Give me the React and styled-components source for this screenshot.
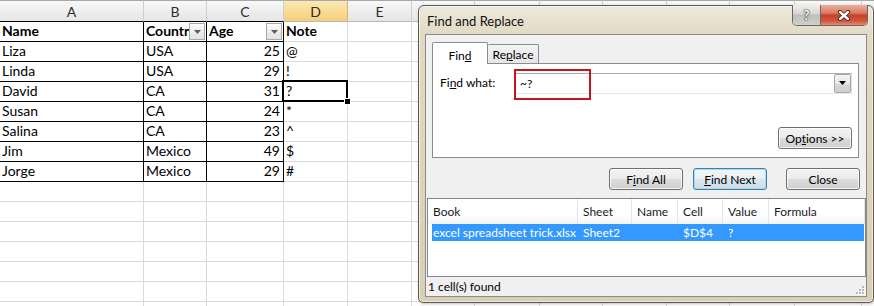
import React from 'react';
import styled, { createGlobalStyle, css } from 'styled-components';

const GlobalStyle = createGlobalStyle`
  html, body {
    margin: 0;
    padding: 0;
    background: #fff;
  }
  body {
    overflow: hidden;
  }
`;

const COLS = [144, 63, 77, 64, 64, 63, 65, 63, 64, 63, 65, 67, 64];
const LETTERS = ['A', 'B', 'C', 'D', 'E', 'F', 'G', 'H', 'I', 'J', 'K', 'L', 'M'];

const rows = [
  { name: 'Liza', country: 'USA', age: 25, note: '@' },
  { name: 'Linda', country: 'USA', age: 29, note: '!' },
  { name: 'David', country: 'CA', age: 31, note: '?' },
  { name: 'Susan', country: 'CA', age: 24, note: '*' },
  { name: 'Salina', country: 'CA', age: 23, note: '^' },
  { name: 'Jim', country: 'Mexico', age: 49, note: '$' },
  { name: 'Jorge', country: 'Mexico', age: 29, note: '#' },
];

const Page = styled.div`
  position: relative;
  width: 874px;
  height: 306px;
  overflow: hidden;
  background: #fff;
`;

/* ---------- spreadsheet ---------- */

const Sheet = styled.div`
  display: grid;
  grid-template-columns: ${COLS.map((w) => w + 'px').join(' ')};
  grid-template-rows: 22px;
  grid-auto-rows: 20px;
  font-family: Lato, 'Liberation Sans', sans-serif;
  font-size: 14px;
  color: #000;
`;

const ColHeader = styled.div`
  box-sizing: border-box;
  display: flex;
  align-items: center;
  justify-content: center;
  padding-top: 1px;
  border-top: 1px solid #a8a8a8;
  border-right: 1px solid ${(p) => (p.$selected ? '#d9b66a' : '#cfcfcf')};
  border-bottom: 1px solid ${(p) => (p.$dark ? '#000' : '#b9b9b9')};
  background: ${(p) =>
    p.$selected
      ? 'linear-gradient(#fbe9b4, #f7d98e 60%, #f4d07c)'
      : 'linear-gradient(#f8f8f8, #ececec 60%, #e6e6e6)'};
  color: #2d2d2d;
  font-size: 14px;
`;

const Cell = styled.div`
  position: relative;
  box-sizing: border-box;
  display: flex;
  align-items: flex-end;
  justify-content: ${(p) => (p.$align === 'right' ? 'flex-end' : 'flex-start')};
  padding: 0 3px 1px 2px;
  border-right: 1px solid ${(p) => (p.$boxed ? '#000' : '#d9d9d9')};
  border-bottom: 1px solid ${(p) => (p.$boxed ? '#000' : '#d9d9d9')};
  font-weight: ${(p) => (p.$bold ? 700 : 400)};
  line-height: 18px;
  white-space: nowrap;

  ${(p) =>
    p.$active &&
    css`
      &::after {
        content: '';
        position: absolute;
        left: -2px;
        top: -2px;
        right: -1px;
        bottom: -1px;
        border: 2px solid #000;
        pointer-events: none;
        z-index: 2;
      }
      &::before {
        content: '';
        position: absolute;
        right: -4px;
        bottom: -4px;
        width: 5px;
        height: 5px;
        background: #000;
        border: 1px solid #fff;
        z-index: 3;
      }
    `}
`;

const CellText = styled.span`
  flex: 1;
  min-width: 0;
  overflow: hidden;
`;

const FilterButton = styled.span`
  flex: none;
  box-sizing: border-box;
  width: 16px;
  height: 17px;
  margin-right: -2px;
  border: 1px solid #a9a9a9;
  background: linear-gradient(#fefefe, #ebebeb 55%, #e2e2e2);
  display: flex;
  align-items: center;
  justify-content: center;
`;

const Filter = () => (
  <FilterButton>
    <svg width="7" height="4" viewBox="0 0 7 4">
      <polygon points="0,0 7,0 3.5,4" fill="#5e5e5e" />
    </svg>
  </FilterButton>
);

/* ---------- dialog ---------- */

const Dialog = styled.div`
  position: absolute;
  left: 418px;
  top: 5px;
  box-sizing: border-box;
  width: 456px;
  height: 298px;
  display: flex;
  flex-direction: column;
  padding: 0 6px 5px 6px;
  border: 1px solid #5b5a55;
  border-radius: 6px 6px 5px 5px;
  background: linear-gradient(180deg, #eee9db 0%, #e1d9c3 28px, #d8cfb6 100%);
  box-shadow: inset 0 0 0 1px rgba(255, 255, 255, 0.55), 1px 1px 3px rgba(0, 0, 0, 0.25);
  font-family: Lato, 'Liberation Sans', sans-serif;
  font-size: 12px;
  color: #000;
`;

const TitleBar = styled.div`
  height: 28px;
  flex: none;
  display: flex;
  justify-content: space-between;
  align-items: flex-start;
`;

const Title = styled.div`
  align-self: center;
  padding-left: 2px;
  padding-top: 2px;
  font-size: 13px;
  color: #111;
`;

const CaptionGroup = styled.div`
  display: flex;
  height: 20px;
  margin-top: -1px;
  margin-right: -1px;
  border: 1px solid #6a6863;
  border-top: none;
  border-radius: 0 0 5px 5px;
  overflow: hidden;
`;

const CaptionButton = styled.div`
  display: flex;
  align-items: center;
  justify-content: center;
  width: ${(p) => (p.$close ? 46 : 27)}px;
  border-left: ${(p) => (p.$close ? '1px solid #6a6863' : 'none')};
  background: ${(p) =>
    p.$close
      ? 'linear-gradient(#eab1a2 0%, #da7a60 40%, #c7402a 52%, #d1573d 80%, #e28c72 100%)'
      : 'linear-gradient(#f0efec 0%, #d9d8d4 42%, #bfbebb 52%, #cfcfcd 100%)'};
  color: #fff;
  font-weight: 700;
  font-size: 13px;
  text-shadow: 0 0 1px #333, 0 0 1px #333, 0 0 2px #444;
`;

const Client = styled.div`
  flex: 1;
  display: flex;
  flex-direction: column;
  border: 1px solid #8c8a82;
  background: #f0f0f0;
`;

const TabArea = styled.div`
  padding: 7px 7px 0 6px;
`;

const TabStrip = styled.div`
  position: relative;
  z-index: 1;
  display: flex;
  align-items: flex-end;
  height: 22px;
  margin-bottom: -1px;
`;

const Tab = styled.div`
  box-sizing: border-box;
  display: flex;
  justify-content: center;
  align-items: center;
  width: ${(p) => (p.$active ? 56 : 51)}px;
  height: ${(p) => (p.$active ? 22 : 19)}px;
  margin-bottom: ${(p) => (p.$active ? 0 : 1)}px;
  padding-top: ${(p) => (p.$active ? 3 : 1)}px;
  border: 1px solid #898c95;
  border-bottom: none;
  border-left: ${(p) => (p.$active ? '1px solid #898c95' : 'none')};
  border-radius: 2px 2px 0 0;
  background: ${(p) => (p.$active ? '#fff' : 'linear-gradient(#f3f3f3, #e6e6e6)')};
`;

const TabPanel = styled.div`
  box-sizing: border-box;
  height: 95px;
  display: flex;
  flex-direction: column;
  justify-content: space-between;
  padding: 8px 6px 8px 7px;
  border: 1px solid #898c95;
  background: #fff;
`;

const FieldRow = styled.div`
  display: flex;
  align-items: center;
  height: 22px;
`;

const Label = styled.div`
  width: 75px;
  flex: none;
  padding-bottom: 1px;
`;

const Combo = styled.div`
  position: relative;
  flex: 1;
  box-sizing: border-box;
  height: 21px;
  display: flex;
  align-items: center;
  padding-left: 4px;
  border: 1px solid;
  border-color: #abadb3 #dbdfe6 #e3e9ef #e2e3ea;
  background: #fff;
`;

const ComboValue = styled.span`
  flex: 1;
`;

const ComboArrow = styled.div`
  box-sizing: border-box;
  width: 17px;
  height: 19px;
  display: flex;
  align-items: center;
  justify-content: center;
  border: 1px solid #a7a7a7;
  border-radius: 2px;
  background: linear-gradient(#f4f4f4, #e8e8e8 50%, #d9d9d9 51%, #cfcfcf);
`;

const Highlight = styled.div`
  position: absolute;
  left: -2px;
  top: -5px;
  width: 77px;
  height: 31px;
  box-sizing: border-box;
  border: 2px solid #c9141c;
  pointer-events: none;
`;

const Button = styled.div`
  box-sizing: border-box;
  flex: none;
  width: 74px;
  height: 22px;
  display: flex;
  align-items: center;
  justify-content: center;
  margin-left: ${(p) => p.$gap || 0}px;
  align-self: ${(p) => (p.$end ? 'flex-end' : 'auto')};
  border: 1px solid ${(p) => (p.$default ? '#3c7fb1' : '#707070')};
  border-radius: 3px;
  background: ${(p) =>
    p.$default
      ? 'linear-gradient(#f3f7f9 0%, #e9eff3 50%, #d9e5ec 51%, #cedde6 100%)'
      : 'linear-gradient(#f2f2f2 0%, #ebebeb 50%, #dddddd 51%, #cfcfcf 100%)'};
  box-shadow: inset 0 0 0 1px ${(p) => (p.$default ? '#a3dcf4' : 'rgba(255,255,255,0.75)')};
  color: #000;
`;

const ButtonRow = styled.div`
  display: flex;
  justify-content: flex-end;
  margin-top: 10px;
  padding-right: 6px;
`;

const Results = styled.div`
  box-sizing: border-box;
  height: 79px;
  margin: 8px 0 0 1px;
  border: 1px solid #828790;
  background: #fff;
  display: flex;
  flex-direction: column;
`;

const ResultHeader = styled.div`
  display: grid;
  grid-template-columns: 150px 54px 46px 45px 46px 1fr;
  height: 25px;
  background: linear-gradient(#ffffff, #ffffff 60%, #f4f5f7);
`;

const HeadCell = styled.div`
  display: flex;
  align-items: center;
  padding-left: 5px;
  border-right: 1px solid #e3e5e8;
  color: #1a1a1a;
`;

const ResultRow = styled.div`
  display: grid;
  grid-template-columns: 146px 54px 46px 45px 46px 1fr;
  height: 17px;
  margin: 0 1px 0 4px;
  background: #3399ff;
  color: #fff;
`;

const RowCell = styled.div`
  display: flex;
  align-items: center;
  padding-left: ${(p) => (p.$first ? 1 : 5)}px;
  white-space: nowrap;
`;

const StatusBar = styled.div`
  flex: 1;
  display: flex;
  align-items: center;
  justify-content: space-between;
  padding: 0 1px 0 2px;
`;

const Grip = () => (
  <svg width="10" height="10" viewBox="0 0 10 10" style={{ alignSelf: 'flex-end', marginBottom: 1 }}>
    {[
      [7, 1],
      [4, 4],
      [7, 4],
      [1, 7],
      [4, 7],
      [7, 7],
    ].map(([x, y]) => (
      <g key={x + '-' + y}>
        <rect x={x + 1} y={y + 1} width="2" height="2" fill="#fff" />
        <rect x={x} y={y} width="2" height="2" fill="#b9b9b9" />
      </g>
    ))}
  </svg>
);

const U = styled.span`
  text-decoration: underline;
  text-underline-offset: 1px;
`;

export default function App() {
  const emptyRows = 15 - 1 - rows.length;

  return (
    <Page>
      <GlobalStyle />
      <Sheet>
        {LETTERS.map((l, i) => (
          <ColHeader key={l} $selected={l === 'D'} $dark={i < 3}>
            {l}
          </ColHeader>
        ))}

        <Cell $boxed $bold>Name</Cell>
        <Cell $boxed $bold>
          <CellText>Country</CellText>
          <Filter />
        </Cell>
        <Cell $boxed $bold>
          <CellText>Age</CellText>
          <Filter />
        </Cell>
        <Cell $bold>Note</Cell>
        {LETTERS.slice(4).map((l) => (
          <Cell key={'h' + l} />
        ))}

        {rows.map((r, ri) => (
          <React.Fragment key={r.name}>
            <Cell $boxed>{r.name}</Cell>
            <Cell $boxed>{r.country}</Cell>
            <Cell $boxed $align="right">{r.age}</Cell>
            <Cell $active={ri === 2}>{r.note}</Cell>
            {LETTERS.slice(4).map((l) => (
              <Cell key={l} />
            ))}
          </React.Fragment>
        ))}

        {Array.from({ length: emptyRows }).map((_, ri) =>
          LETTERS.map((l) => <Cell key={'e' + ri + l} />)
        )}
      </Sheet>

      <Dialog>
        <TitleBar>
          <Title>Find and Replace</Title>
          <CaptionGroup>
            <CaptionButton>?</CaptionButton>
            <CaptionButton $close>
              <svg width="14" height="11" viewBox="0 0 14 11">
                <path d="M3 2 L11 9 M11 2 L3 9" stroke="#4a1d14" strokeWidth="4.2" strokeLinecap="round" />
                <path d="M3 2 L11 9 M11 2 L3 9" stroke="#fff" strokeWidth="2.4" strokeLinecap="round" />
              </svg>
            </CaptionButton>
          </CaptionGroup>
        </TitleBar>

        <Client>
          <TabArea>
            <TabStrip>
              <Tab $active>
                Fin<U>d</U>
              </Tab>
              <Tab>
                Re<U>p</U>lace
              </Tab>
            </TabStrip>
            <TabPanel>
              <FieldRow>
                <Label>
                  Fi<U>n</U>d what:
                </Label>
                <Combo>
                  <ComboValue>~?</ComboValue>
                  <ComboArrow>
                    <svg width="7" height="4" viewBox="0 0 7 4">
                      <polygon points="0,0 7,0 3.5,4" fill="#000" />
                    </svg>
                  </ComboArrow>
                  <Highlight />
                </Combo>
              </FieldRow>
              <Button $end>
                Op<U>t</U>ions &gt;&gt;
              </Button>
            </TabPanel>
          </TabArea>

          <ButtonRow>
            <Button>
              F<U>i</U>nd All
            </Button>
            <Button $default $gap={10}>
              <U>F</U>ind Next
            </Button>
            <Button $gap={19}>Close</Button>
          </ButtonRow>

          <Results>
            <ResultHeader>
              <HeadCell>Book</HeadCell>
              <HeadCell>Sheet</HeadCell>
              <HeadCell>Name</HeadCell>
              <HeadCell>Cell</HeadCell>
              <HeadCell>Value</HeadCell>
              <HeadCell>Formula</HeadCell>
            </ResultHeader>
            <ResultRow>
              <RowCell $first>excel spreadsheet trick.xlsx</RowCell>
              <RowCell>Sheet2</RowCell>
              <RowCell />
              <RowCell>$D$4</RowCell>
              <RowCell>?</RowCell>
              <RowCell />
            </ResultRow>
          </Results>

          <StatusBar>
            <span>1 cell(s) found</span>
            <Grip />
          </StatusBar>
        </Client>
      </Dialog>
    </Page>
  );
}
